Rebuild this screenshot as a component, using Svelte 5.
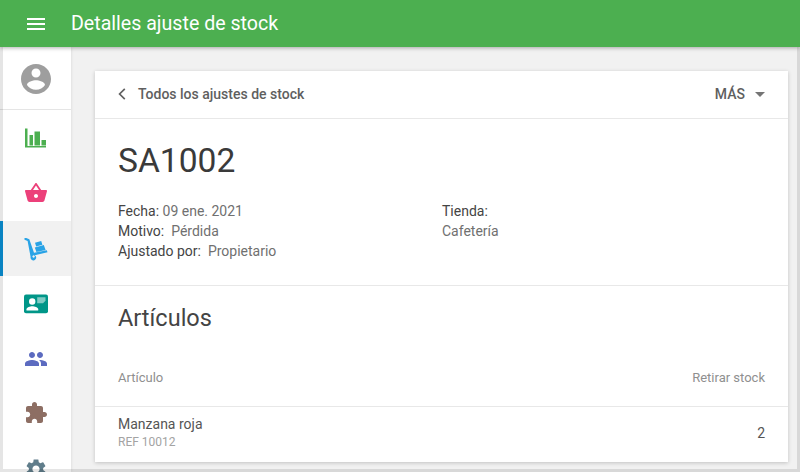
<script>
  const navItems = [
    { id: 'reports', color: '#4caf50', path: 'M1 1.500h2.500V19H22v1.500H1zM5.500 8h3.500v10.500H5.500zM10.500 4.500h5.500v14h-5.500zM17.500 13h4.500v5.500h-4.500z' },
    { id: 'sales', color: '#ec407a', lift: true, path: 'M17.210 9l-4.380-6.560c-.19-.28-.51-.42-.83-.42-.32 0-.64.14-.83.43L6.790 9H2c-.55 0-1 .45-1 1 0 .09.01.18.04.27l2.540 9.270c.23.84 1 1.460 1.920 1.460h13c.92 0 1.690-.62 1.930-1.460l2.540-9.270L23 10c0-.55-.45-1-1-1h-4.790zM9 9l3-4.400L15 9H9zm3 8c-1.100 0-2-.9-2-2s.9-2 2-2 2 .9 2 2-.9 2-2 2z' },
    { id: 'inventory', color: '#29a3e6', active: true, path: 'M.5 1h1.800l3 1.300 4.700 13.500 12.800-2.600.7 2-12.700 3a2.800 2.800 0 1 1-4.200 1.800L3.600 3.900.5 2.800zM9.600 18.300a1.200 1.200 0 1 0 .01 0zM11 5.800l6.200-1.800 1.200 3.800-6.200 1.800zM10.800 10.500l9-2.500 1.800 5-9.200 2z' },
    { id: 'employees', color: '#009688', badge: true },
    { id: 'customers', color: '#5c6bc0', path: 'M16 11c1.660 0 2.990-1.340 2.990-3S17.660 5 16 5c-1.660 0-3 1.340-3 3s1.340 3 3 3zm-8 0c1.660 0 2.990-1.340 2.990-3S9.660 5 8 5C6.340 5 5 6.340 5 8s1.340 3 3 3zm0 2c-2.330 0-7 1.170-7 3.500V19h14v-2.500c0-2.330-4.670-3.500-7-3.500zm8 0c-.29 0-.62.02-.97.05 1.160.84 1.970 1.970 1.970 3.450V19h6v-2.500c0-2.330-4.670-3.500-7-3.500z' },
    { id: 'apps', color: '#8d6e63', lift: true, path: 'M20.500 11H19V7c0-1.100-.9-2-2-2h-4V3.500C13 2.120 11.880 1 10.500 1S8 2.120 8 3.500V5H4c-1.100 0-1.990.9-1.990 2v3.800H3.500c1.490 0 2.700 1.210 2.700 2.700s-1.210 2.700-2.700 2.700H2V20c0 1.100.9 2 2 2h3.800v-1.500c0-1.490 1.210-2.700 2.700-2.700 1.490 0 2.700 1.210 2.700 2.700V22H17c1.100 0 2-.9 2-2v-4h1.500c1.380 0 2.500-1.120 2.500-2.500S21.880 11 20.500 11z' },
    { id: 'settings', color: '#607d8b', path: 'M19.140 12.940c.04-.3.06-.61.06-.94 0-.32-.02-.64-.07-.94l2.030-1.580c.18-.14.23-.41.12-.61l-1.920-3.320c-.12-.22-.37-.29-.59-.22l-2.390.96c-.5-.38-1.030-.7-1.620-.94l-.36-2.540c-.04-.24-.24-.41-.48-.41h-3.840c-.24 0-.43.17-.47.41l-.36 2.540c-.59.24-1.130.57-1.620.94l-2.390-.96c-.22-.08-.47 0-.59.22L2.740 8.870c-.12.21-.08.47.12.61l2.030 1.580c-.05.3-.09.63-.09.94s.02.64.07.94l-2.030 1.580c-.18.14-.23.41-.12.61l1.920 3.320c.12.22.37.29.59.22l2.390-.96c.5.38 1.030.7 1.620.94l.36 2.540c.05.24.24.41.48.41h3.840c.24 0 .44-.17.47-.41l.36-2.540c.59-.24 1.130-.56 1.620-.94l2.390.96c.22.08.47 0 .59-.22l1.920-3.320c.12-.22.07-.47-.12-.61l-2.010-1.580zM12 15.600c-1.980 0-3.600-1.620-3.600-3.600s1.620-3.600 3.600-3.600 3.600 1.620 3.600 3.600-1.620 3.600-3.600 3.600z' }
  ];
</script>

<div class="app">
  <header class="topbar">
    <button type="button" class="menu" aria-label="Menú">
      <svg width="24" height="24" viewBox="0 0 24 24"><path fill="#fff" d="M3 18h18v-2H3v2zm0-5h18v-2H3v2zm0-7v2h18V6H3z" /></svg>
    </button>
    <h1>Detalles ajuste de stock</h1>
  </header>

  <div class="body">
    <nav class="sidebar">
      <div class="profile">
        <svg width="36" height="36" viewBox="0 0 24 24"><path fill="#9e9e9e" d="M12 2C6.480 2 2 6.480 2 12s4.480 10 10 10 10-4.480 10-10S17.520 2 12 2zm0 3c1.660 0 3 1.340 3 3s-1.340 3-3 3-3-1.340-3-3 1.340-3 3-3zm0 14.200c-2.500 0-4.710-1.280-6-3.220.03-1.990 4-3.080 6-3.080 1.990 0 5.970 1.090 6 3.080-1.290 1.940-3.500 3.220-6 3.220z" /></svg>
      </div>
      <div class="nav-list">
        {#each navItems as item}
          <div class="nav-item" class:active={item.active}>
            <svg class:lift={item.lift} width="24" height="24" viewBox="0 0 24 24">
              {#if item.badge}
                <rect x="0" y="2.500" width="24" height="18.700" rx="2" fill={item.color} />
                <path fill="#80cbc4" d="M13.200 5.200h8.300v3.500l-2.500 2.500h-5.800z" />
                <circle cx="8.200" cy="9.500" r="3.200" fill="#fff" />
                <path fill="#fff" d="M2.500 18.500v-1.300c0-2 3.700-3 5.800-3s5.900 1 5.900 3v1.300z" />
              {:else}
                <path fill={item.color} d={item.path} />
              {/if}
            </svg>
          </div>
        {/each}
      </div>
    </nav>

    <main class="content">
      <section class="card">
        <div class="card-head">
          <a class="back" href="#top">
            <svg width="24" height="24" viewBox="0 0 24 24"><path fill="none" stroke="#616161" stroke-width="1.700" d="M17.800 6.800 12.600 12l5.200 5.200" /></svg>
            <span>Todos los ajustes de stock</span>
          </a>
          <button type="button" class="more">
            <span>MÁS</span>
            <i class="caret"></i>
          </button>
        </div>

        <div class="summary">
          <h2>SA1002</h2>
          <div class="meta">
            <div>
              <p><b>Fecha:</b> 09 ene. 2021</p>
              <p><b>Motivo:</b>&nbsp; Pérdida</p>
              <p><b>Ajustado por:</b>&nbsp; Propietario</p>
            </div>
            <div>
              <p><b>Tienda:</b></p>
              <p>Cafetería</p>
            </div>
          </div>
        </div>

        <div class="items">
          <h3>Artículos</h3>
          <div class="row head-row">
            <span>Artículo</span>
            <span>Retirar stock</span>
          </div>
          <div class="row item-row">
            <div>
              <div class="name">Manzana roja</div>
              <div class="ref">REF 10012</div>
            </div>
            <span class="qty">2</span>
          </div>
        </div>
      </section>
    </main>
  </div>

  <div class="frame"></div>
</div>

<style>
  :global(body) {
    margin: 0;
    font-family: Roboto, 'Liberation Sans', sans-serif;
    color: #333;
  }

  .app {
    position: relative;
    height: 100vh;
    display: flex;
    flex-direction: column;
    overflow: hidden;
    background: #f1f1f1;
  }

  /* translucent window edge over everything */
  .frame {
    position: absolute;
    inset: 0;
    border: 3px solid rgba(0, 0, 0, 0.1);
    pointer-events: none;
  }

  .topbar {
    position: relative;
    z-index: 2;
    flex: 0 0 47px;
    display: flex;
    align-items: center;
    background: #4caf50;
    box-shadow: 0 1px 4px rgba(0, 0, 0, 0.3);
    color: #fff;
  }

  .menu {
    width: 71px;
    height: 47px;
    padding: 0;
    border: 0;
    background: none;
    display: flex;
    align-items: center;
    justify-content: center;
  }

  h1 {
    margin: 0;
    font-size: 19.600px;
    font-weight: 400;
  }

  .body {
    flex: 1;
    display: flex;
    min-height: 0;
  }

  .sidebar {
    flex: 0 0 71px;
    background: #fff;
    box-shadow: 0 0 3px rgba(0, 0, 0, 0.12);
  }

  .profile {
    height: 62px;
    box-sizing: content-box;
    border-bottom: 1px solid #e5e5e5;
    display: flex;
    align-items: center;
    justify-content: center;
  }

  .profile svg {
    margin-top: 2px;
  }

  .nav-list {
    padding-top: 1px;
  }

  .nav-item {
    height: 55px;
    display: flex;
    align-items: center;
    justify-content: center;
    border-left: 3px solid transparent;
    box-sizing: border-box;
    padding-right: 3px;
  }

  .nav-item.active {
    background: #f1f1f1;
    border-left-color: #0b92d8;
  }

  .lift {
    margin-bottom: 2px;
  }

  .content {
    flex: 1;
    min-width: 0;
    padding: 24px 12px 0 24px;
  }

  .card {
    height: 391px;
    background: #fff;
    box-shadow: 0 1px 4px rgba(0, 0, 0, 0.2);
  }

  .card-head {
    height: 45px;
    display: flex;
    align-items: center;
    justify-content: space-between;
    padding: 0 23px 2px 12px;
    border-bottom: 1px solid #e8e8e8;
  }

  .back {
    display: flex;
    align-items: center;
    gap: 7px;
    color: #5f5f5f;
    font-size: 14px;
    font-weight: 500;
    text-decoration: none;
  }

  .more {
    display: flex;
    align-items: center;
    gap: 10px;
    padding: 0;
    border: 0;
    background: none;
    color: #5f5f5f;
    font: 500 14px Roboto, sans-serif;
  }

  .caret {
    width: 0;
    height: 0;
    border-left: 5px solid transparent;
    border-right: 5px solid transparent;
    border-top: 5px solid #757575;
    margin-top: 2px;
  }

  .summary {
    padding: 21px 24px 24px 23px;
    border-bottom: 1px solid #e8e8e8;
    height: 167px;
    box-sizing: border-box;
  }

  h2 {
    margin: 0 0 19px;
    font-size: 33.600px;
    font-weight: 400;
    line-height: 42px;
    color: #3a3a3a;
  }

  .meta {
    display: grid;
    grid-template-columns: 324px 1fr;
    font-size: 14px;
    line-height: 20px;
    color: #707070;
  }

  .meta p {
    margin: 0;
  }

  .meta b {
    font-weight: 400;
    color: #444;
  }

  .items {
    padding-top: 16px;
  }

  h3 {
    margin: 0 23px;
    font-size: 23.500px;
    font-weight: 400;
    line-height: 32px;
    color: #444;
  }

  .row {
    display: flex;
    justify-content: space-between;
    align-items: center;
    padding: 0 23px;
  }

  .head-row {
    height: 54px;
    margin-top: 16px;
    padding-bottom: 2px;
    border-bottom: 1px solid #e8e8e8;
    font-size: 13px;
    color: #8f8f8f;
  }

  .item-row {
    height: 49px;
    padding-bottom: 6px;
  }

  .name {
    font-size: 14px;
    line-height: 20px;
    color: #555;
  }

  .ref {
    font-size: 12px;
    line-height: 16px;
    color: #a3a3a3;
  }

  .qty {
    margin-top: 3px;
    font-size: 14px;
    color: #555;
  }
</style>
